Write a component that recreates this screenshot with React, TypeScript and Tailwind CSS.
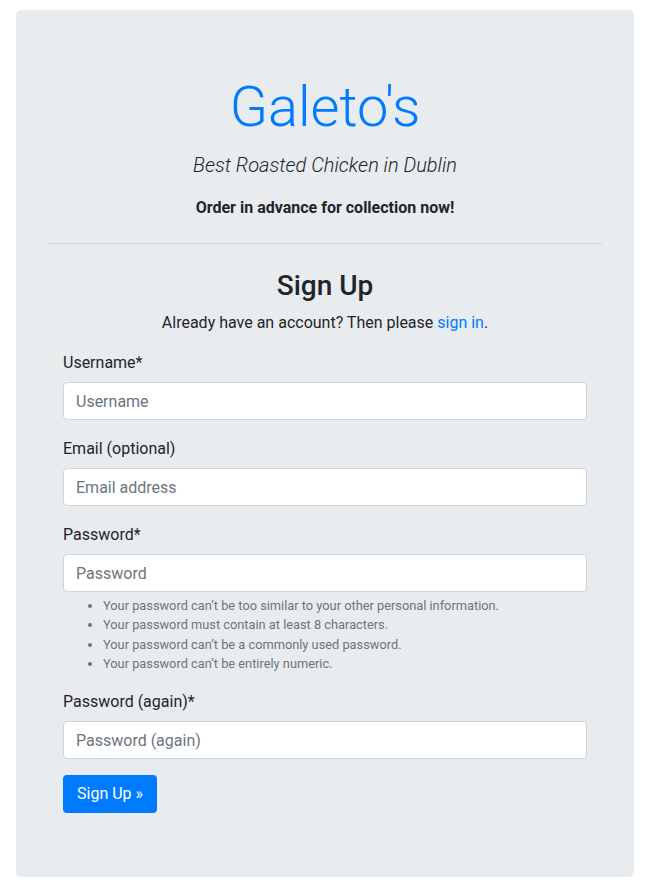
const font = { fontFamily: "Roboto, 'Liberation Sans', sans-serif" };

function Field({ label, placeholder, type = "text" }: { label: string; placeholder: string; type?: string }) {
  return (
    <div className="flex flex-col">
      <label className="mb-2 pt-px text-base leading-6 text-[#212529]">{label}</label>
      <input
        type={type}
        placeholder={placeholder}
        className="-mt-px h-[38px] w-full rounded border border-[#ced4da] bg-white px-3 py-1.5 text-base text-[#495057] placeholder:text-[#6c757d] outline-none"
      />
    </div>
  );
}

export default function App() {
  return (
    <div className="min-h-[889px] bg-white pt-[10px] pr-[13px] pb-3 pl-4" style={font}>
      <div className="rounded-[5px] bg-[#e9ecef] px-8 py-16">
        {/* Header */}
        <div className="text-center">
          <h1 className="mb-2 text-[56px] leading-[1.2] font-light text-[#007bff]">Galeto's</h1>
          <p className="mb-4 pt-0.5 text-xl leading-[28px] font-light italic text-[#212529]">Best Roasted Chicken in Dublin</p>
          <p className="pt-0.5 text-base leading-[22px] font-bold text-[#212529]">Order in advance for collection now!</p>
        </div>

        <hr className="my-6 border-t border-black/10" />

        {/* Sign up form */}
        <div className="px-[15px]">
          <h3 className="mb-2 pt-0.5 text-center text-[28px] leading-[32px] font-medium text-[#212529]">Sign Up</h3>
          <p className="mb-4 pt-0.5 text-center text-base leading-[22px] text-[#212529]">
            Already have an account? Then please <a className="text-[#007bff]">sign in</a>.
          </p>

          <form className="flex flex-col gap-4">
            <Field label="Username*" placeholder="Username" />
            <Field label="Email (optional)" placeholder="Email address" />
            <div>
              <Field label="Password*" placeholder="Password" type="password" />
              <ul className="mt-1 list-disc pl-10 text-[12.8px] leading-[19.2px] text-[#6c757d]">
                <li>Your password can’t be too similar to your other personal information.</li>
                <li>Your password must contain at least 8 characters.</li>
                <li>Your password can’t be a commonly used password.</li>
                <li>Your password can’t be entirely numeric.</li>
              </ul>
            </div>
            <Field label="Password (again)*" placeholder="Password (again)" type="password" />
            <div>
              <button type="button" className="h-[38px] rounded bg-[#007bff] px-[14px] text-base text-white">
                Sign Up »
              </button>
            </div>
          </form>
        </div>
      </div>
    </div>
  );
}
